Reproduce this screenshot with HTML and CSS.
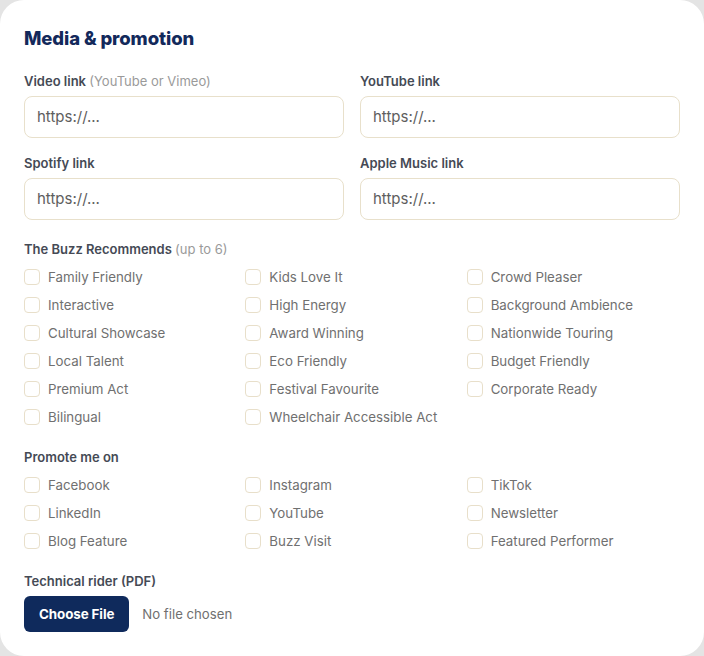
FILE: index.html
```html
<!DOCTYPE html>
<html lang="en">
<head>
<meta charset="utf-8">
<title>Media &amp; promotion</title>
<link rel="stylesheet" href="styles.css">
</head>
<body>
<section class="card">
  <h2 class="title">Media &amp; promotion</h2>

  <div class="fields">
    <div class="field">
      <label class="label">Video link <span class="hint">(YouTube or Vimeo)</span></label>
      <input class="input" type="text" placeholder="https://...">
    </div>
    <div class="field">
      <label class="label">YouTube link</label>
      <input class="input" type="text" placeholder="https://...">
    </div>
    <div class="field">
      <label class="label">Spotify link</label>
      <input class="input" type="text" placeholder="https://...">
    </div>
    <div class="field">
      <label class="label">Apple Music link</label>
      <input class="input" type="text" placeholder="https://...">
    </div>
  </div>

  <div class="section">
    <div class="label">The Buzz Recommends <span class="hint">(up to 6)</span></div>
    <div class="checks">
      <label class="check"><span class="box"></span>Family Friendly</label>
      <label class="check"><span class="box"></span>Kids Love It</label>
      <label class="check"><span class="box"></span>Crowd Pleaser</label>
      <label class="check"><span class="box"></span>Interactive</label>
      <label class="check"><span class="box"></span>High Energy</label>
      <label class="check"><span class="box"></span>Background Ambience</label>
      <label class="check"><span class="box"></span>Cultural Showcase</label>
      <label class="check"><span class="box"></span>Award Winning</label>
      <label class="check"><span class="box"></span>Nationwide Touring</label>
      <label class="check"><span class="box"></span>Local Talent</label>
      <label class="check"><span class="box"></span>Eco Friendly</label>
      <label class="check"><span class="box"></span>Budget Friendly</label>
      <label class="check"><span class="box"></span>Premium Act</label>
      <label class="check"><span class="box"></span>Festival Favourite</label>
      <label class="check"><span class="box"></span>Corporate Ready</label>
      <label class="check"><span class="box"></span>Bilingual</label>
      <label class="check"><span class="box"></span>Wheelchair Accessible Act</label>
    </div>
  </div>

  <div class="section">
    <div class="label">Promote me on</div>
    <div class="checks">
      <label class="check"><span class="box"></span>Facebook</label>
      <label class="check"><span class="box"></span>Instagram</label>
      <label class="check"><span class="box"></span>TikTok</label>
      <label class="check"><span class="box"></span>LinkedIn</label>
      <label class="check"><span class="box"></span>YouTube</label>
      <label class="check"><span class="box"></span>Newsletter</label>
      <label class="check"><span class="box"></span>Blog Feature</label>
      <label class="check"><span class="box"></span>Buzz Visit</label>
      <label class="check"><span class="box"></span>Featured Performer</label>
    </div>
  </div>

  <div class="section">
    <div class="label label-tight">Technical rider (PDF)</div>
    <div class="file-row">
      <button class="file-btn" type="button">Choose File</button>
      <span class="file-name">No file chosen</span>
    </div>
  </div>
</section>
</body>
</html>
```

FILE: styles.css
```css
* { box-sizing: border-box; }

html, body {
  margin: 0;
  padding: 0;
  background: #e4e4e4;
}

body {
  font-family: "Inter", "Noto Sans", "Liberation Sans", sans-serif;
  width: 704px;
  height: 656px;
  overflow: hidden;
}

.card {
  width: 704px;
  height: 656px;
  background: #ffffff;
  border-radius: 24px;
  padding: 24px;
}

.title {
  margin: 0 0 20px;
  font-size: 18.5px;
  line-height: 28px;
  font-weight: 800;
  color: #13295b;
  letter-spacing: -0.1px;
}

.fields {
  display: grid;
  grid-template-columns: 1fr 1fr;
  column-gap: 16px;
  row-gap: 16px;
}

.field {
  display: flex;
  flex-direction: column;
}

.label {
  display: block;
  font-size: 13px;
  line-height: 18px;
  font-weight: 600;
  color: #454a55;
  margin-bottom: 6px;
}

.hint {
  font-weight: 400;
  color: #9a9a9a;
}

.input {
  height: 42px;
  border: 1px solid #e8e0cb;
  border-radius: 8px;
  padding: 0 12px 1px;
  font-family: inherit;
  font-size: 15px;
  color: #333;
  background: #fff;
  outline: none;
}

.input::placeholder {
  color: #5e5e5e;
}

.section {
  margin-top: 20px;
}

.section .label {
  margin-bottom: 8px;
}

.section .label-tight {
  margin-bottom: 6px;
}

.checks {
  display: grid;
  grid-template-columns: repeat(3, 1fr);
  column-gap: 8px;
  row-gap: 6px;
}

.check {
  display: flex;
  align-items: center;
  gap: 8px;
  height: 22px;
  font-size: 13.3px;
  color: #707070;
}

.box {
  width: 16px;
  height: 16px;
  border: 1px solid #e8dfca;
  border-radius: 4px;
  flex: none;
}

.file-row {
  display: flex;
  align-items: center;
  gap: 13px;
}

.file-btn {
  height: 36px;
  padding: 0 15px;
  border: none;
  border-radius: 6px;
  background: #0f2a5c;
  color: #fff;
  font-family: inherit;
  font-size: 13.4px;
  font-weight: 700;
  letter-spacing: -0.1px;
}

.file-name {
  font-size: 13.2px;
  color: #707070;
}
```
